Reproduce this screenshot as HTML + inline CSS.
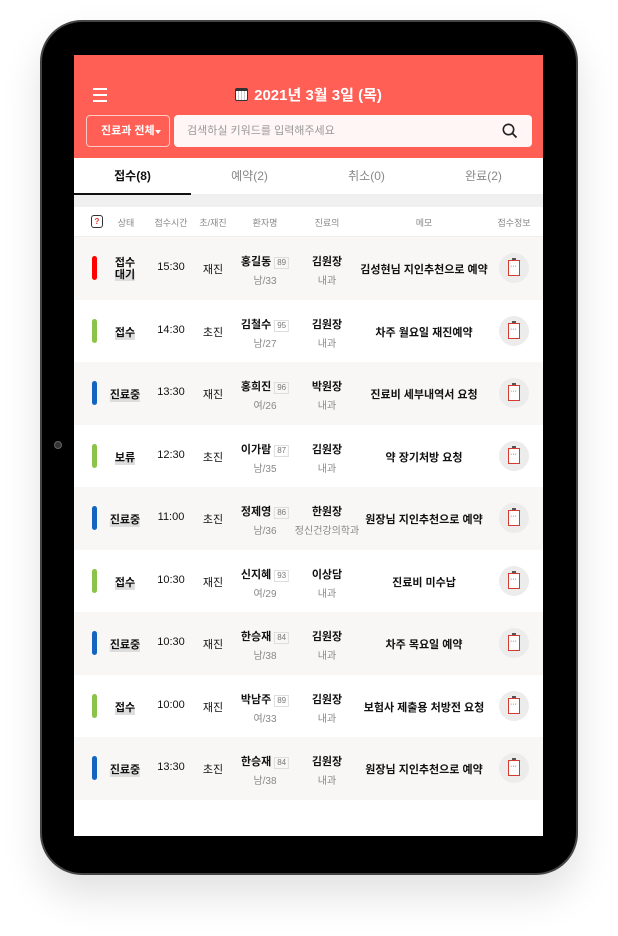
<!DOCTYPE html>
<html><head><meta charset="utf-8">
<style>
*{margin:0;padding:0;box-sizing:border-box}
body{width:618px;height:936px;background:#fff;position:relative;overflow:hidden;font-family:"Liberation Sans","Noto Sans CJK KR",sans-serif}
.tab{position:absolute;left:40px;top:20px;width:538px;height:855px;background:#000;border-radius:42px;border:2px solid #444;box-shadow:0 20px 40px rgba(0,0,0,.12)}
.dot{position:absolute;left:54px;top:441px;width:8px;height:8px;border-radius:50%;background:#333;border:1px solid #666}
.scr{position:absolute;left:74px;top:55px;width:469px;height:781px;background:#fff;overflow:hidden}
.hdr{position:absolute;left:0;top:0;width:469px;height:103px;background:#ff5f55}
.menu{position:absolute;left:19px;top:33px;width:14px}
.menu i{display:block;height:2px;background:#fff;margin-bottom:4px}
.date{position:absolute;left:0;width:469px;top:29px;text-align:center;color:#fff;font-size:15px;font-weight:bold}
.sel{position:absolute;left:12px;top:60px;width:84px;height:32px;border:1px solid #ffc9c4;border-radius:4px;color:#fff;font-size:11px;font-weight:bold;line-height:30px;padding-left:14px}
.sel:after{content:"";position:absolute;right:8px;top:14px;border:3px solid transparent;border-top:4px solid #fff}
.srch{position:absolute;left:100px;top:60px;width:358px;height:32px;background:#fff6f5;border-radius:4px;color:#999;font-size:11px;line-height:32px;padding-left:13px}
.tabs{position:absolute;top:103px;left:0;width:469px;height:37px;border-bottom:1px solid #eee}
.tabs div{position:absolute;top:0;width:117px;text-align:center;line-height:36px;font-size:12px;color:#888}
.tabs .on{color:#111;border-bottom:2px solid #111;height:37px}
.gap{position:absolute;top:140px;left:0;width:469px;height:12px;background:#f0f0f0}
.th{position:absolute;top:152px;left:0;width:469px;height:30px;border-bottom:1px solid #eee;font-size:9px;color:#888}
.c{position:absolute;transform:translateX(-50%);text-align:center;white-space:nowrap}
.row{position:absolute;left:0;width:469px;height:62.5px}
.row.g{background:#f8f7f5}
.bar{position:absolute;left:18px;top:19px;width:5px;height:24px;border-radius:3px}
.st{font-size:11px;font-weight:bold;color:#111;background:linear-gradient(transparent 60%,#ddd 60%)}
.tm{font-size:11px;color:#111}
.nm{font-size:11px;font-weight:bold;color:#111}
.age{display:inline-block;border:1px solid #ddd;font-size:8px;color:#777;font-weight:normal;padding:0 2px;margin-left:3px;line-height:10px}
.sub{font-size:10px;color:#888;margin-top:3px;font-weight:normal}
.memo{font-size:11px;font-weight:bold;color:#111}
.ic{position:absolute;left:425px;top:16px;width:30px;height:30px;border-radius:50%;background:#ececec}
.ic b{position:absolute;left:9px;top:7px;width:12px;height:16px;border:1.5px solid #d63b2f;background:#fff}
.ic b:before{content:"";position:absolute;left:2.5px;top:-3px;width:4px;height:2px;background:#555}
.ic b:after{content:"···";position:absolute;left:1px;top:2px;font-size:7px;color:#333;font-weight:normal}
</style></head><body>
<div class="tab"></div>
<div class="dot"></div>
<div class="scr">
 <div class="hdr">
  <div class="menu"><i></i><i></i><i></i></div>
  <div class="date"><span style="display:inline-block;width:13px;height:13px;background:#fff;border:1.5px solid #333;border-top-width:3px;vertical-align:-1px;margin-right:6px;border-radius:2px;background-image:repeating-linear-gradient(90deg,transparent 0 2px,#ccc 2px 3px)"></span>2021년 3월 3일 (목)</div>
  <div class="sel">진료과 전체</div>
  <div class="srch">검색하실 키워드를 입력해주세요
   <svg style="position:absolute;right:14px;top:8px" width="16" height="16" viewBox="0 0 16 16"><circle cx="6.5" cy="6.5" r="5.2" fill="none" stroke="#222" stroke-width="1.6"/><line x1="10.3" y1="10.3" x2="14.5" y2="14.5" stroke="#222" stroke-width="1.8"/></svg></div>
 </div>
 <div class="tabs">
  <div class="on" style="left:0;color:#111;font-weight:bold">접수(8)</div>
  <div style="left:117px">예약(2)</div>
  <div style="left:234px">취소(0)</div>
  <div style="left:351px">완료(2)</div>
 </div>
 <div class="gap"></div>
 <div class="th">
  <div class="c" style="left:23px;top:8px;width:12px;height:13px;border:1px solid #333;border-radius:3px;color:#d33;font-size:8px;line-height:11px;font-weight:bold">?</div>
  <div class="c" style="left:52px;top:9px">상태</div>
  <div class="c" style="left:97px;top:9px">접수시간</div>
  <div class="c" style="left:139px;top:9px">초/재진</div>
  <div class="c" style="left:191px;top:9px">환자명</div>
  <div class="c" style="left:253px;top:9px">진료의</div>
  <div class="c" style="left:350px;top:9px">메모</div>
  <div class="c" style="left:440px;top:9px">접수정보</div>
 </div>
 <div class="row g" style="top:182px"><div class="bar" style="background:#f00"></div><div class="c st" style="left:51px;top:20px;line-height:12px">접수<br>대기</div><div class="c tm" style="left:97px;top:24px">15:30</div><div class="c tm" style="left:139px;top:24px">재진</div><div class="c nm" style="left:191px;top:16px">홍길동<span class="age">89</span><div class="sub">남/33</div></div><div class="c nm" style="left:253px;top:16px">김원장<div class="sub">내과</div></div><div class="c memo" style="left:350px;top:24px">김성현님 지인추천으로 예약</div><div class="ic"><b></b></div></div>
 <div class="row" style="top:244.5px"><div class="bar" style="background:#8bc34a"></div><div class="c st" style="left:51px;top:24px">접수</div><div class="c tm" style="left:97px;top:24px">14:30</div><div class="c tm" style="left:139px;top:24px">초진</div><div class="c nm" style="left:191px;top:16px">김철수<span class="age">95</span><div class="sub">남/27</div></div><div class="c nm" style="left:253px;top:16px">김원장<div class="sub">내과</div></div><div class="c memo" style="left:350px;top:24px">차주 월요일 재진예약</div><div class="ic"><b></b></div></div>
 <div class="row g" style="top:307px"><div class="bar" style="background:#1565c0"></div><div class="c st" style="left:51px;top:24px">진료중</div><div class="c tm" style="left:97px;top:24px">13:30</div><div class="c tm" style="left:139px;top:24px">재진</div><div class="c nm" style="left:191px;top:16px">홍희진<span class="age">96</span><div class="sub">여/26</div></div><div class="c nm" style="left:253px;top:16px">박원장<div class="sub">내과</div></div><div class="c memo" style="left:350px;top:24px">진료비 세부내역서 요청</div><div class="ic"><b></b></div></div>
 <div class="row" style="top:369.5px"><div class="bar" style="background:#8bc34a"></div><div class="c st" style="left:51px;top:24px">보류</div><div class="c tm" style="left:97px;top:24px">12:30</div><div class="c tm" style="left:139px;top:24px">초진</div><div class="c nm" style="left:191px;top:16px">이가람<span class="age">87</span><div class="sub">남/35</div></div><div class="c nm" style="left:253px;top:16px">김원장<div class="sub">내과</div></div><div class="c memo" style="left:350px;top:24px">약 장기처방 요청</div><div class="ic"><b></b></div></div>
 <div class="row g" style="top:432px"><div class="bar" style="background:#1565c0"></div><div class="c st" style="left:51px;top:24px">진료중</div><div class="c tm" style="left:97px;top:24px">11:00</div><div class="c tm" style="left:139px;top:24px">초진</div><div class="c nm" style="left:191px;top:16px">정제영<span class="age">86</span><div class="sub">남/36</div></div><div class="c nm" style="left:253px;top:16px">한원장<div class="sub">정신건강의학과</div></div><div class="c memo" style="left:350px;top:24px">원장님 지인추천으로 예약</div><div class="ic"><b></b></div></div>
 <div class="row" style="top:494.5px"><div class="bar" style="background:#8bc34a"></div><div class="c st" style="left:51px;top:24px">접수</div><div class="c tm" style="left:97px;top:24px">10:30</div><div class="c tm" style="left:139px;top:24px">재진</div><div class="c nm" style="left:191px;top:16px">신지혜<span class="age">93</span><div class="sub">여/29</div></div><div class="c nm" style="left:253px;top:16px">이상담<div class="sub">내과</div></div><div class="c memo" style="left:350px;top:24px">진료비 미수납</div><div class="ic"><b></b></div></div>
 <div class="row g" style="top:557px"><div class="bar" style="background:#1565c0"></div><div class="c st" style="left:51px;top:24px">진료중</div><div class="c tm" style="left:97px;top:24px">10:30</div><div class="c tm" style="left:139px;top:24px">재진</div><div class="c nm" style="left:191px;top:16px">한승재<span class="age">84</span><div class="sub">남/38</div></div><div class="c nm" style="left:253px;top:16px">김원장<div class="sub">내과</div></div><div class="c memo" style="left:350px;top:24px">차주 목요일 예약</div><div class="ic"><b></b></div></div>
 <div class="row" style="top:619.5px"><div class="bar" style="background:#8bc34a"></div><div class="c st" style="left:51px;top:24px">접수</div><div class="c tm" style="left:97px;top:24px">10:00</div><div class="c tm" style="left:139px;top:24px">재진</div><div class="c nm" style="left:191px;top:16px">박남주<span class="age">89</span><div class="sub">여/33</div></div><div class="c nm" style="left:253px;top:16px">김원장<div class="sub">내과</div></div><div class="c memo" style="left:350px;top:24px">보험사 제출용 처방전 요청</div><div class="ic"><b></b></div></div>
 <div class="row g" style="top:682px"><div class="bar" style="background:#1565c0"></div><div class="c st" style="left:51px;top:24px">진료중</div><div class="c tm" style="left:97px;top:24px">13:30</div><div class="c tm" style="left:139px;top:24px">초진</div><div class="c nm" style="left:191px;top:16px">한승재<span class="age">84</span><div class="sub">남/38</div></div><div class="c nm" style="left:253px;top:16px">김원장<div class="sub">내과</div></div><div class="c memo" style="left:350px;top:24px">원장님 지인추천으로 예약</div><div class="ic"><b></b></div></div>
</div>
</body></html>
